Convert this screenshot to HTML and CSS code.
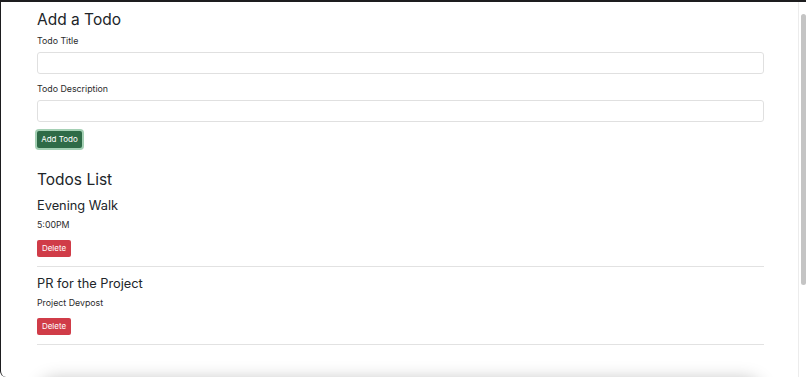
FILE: index.html
```html
<!DOCTYPE html>
<html lang="en">
<head>
    <meta charset="UTF-8">
    <meta name="viewport" content="width=device-width, initial-scale=1.0">
    <title>Todos</title>
    <link rel="stylesheet" href="styles.css">
</head>
<body>
    <div class="window">
        <div class="container">
            <h3 class="form-title">Add a Todo</h3>
            <form class="todo-form">
                <label class="form-label" for="title">Todo Title</label>
                <input class="form-control" type="text" id="title">
                <label class="form-label second" for="desc">Todo Description</label>
                <input class="form-control" type="text" id="desc">
                <button type="button" class="btn btn-success">Add Todo</button>
            </form>

            <h3 class="list-title">Todos List</h3>
            <div class="todo">
                <h4 class="todo-title">Evening Walk</h4>
                <p class="todo-desc">5:00PM</p>
                <button class="btn btn-danger">Delete</button>
            </div>
            <hr class="divider">
            <div class="todo">
                <h4 class="todo-title">PR for the Project</h4>
                <p class="todo-desc">Project Devpost</p>
                <button class="btn btn-danger">Delete</button>
            </div>
            <hr class="divider">
            <div class="footer-card"></div>
        </div>
        <div class="scrollbar"><div class="thumb"></div></div>
    </div>
</body>
</html>
```

FILE: styles.css
```css
* {
    box-sizing: border-box;
}

html, body {
    margin: 0;
    padding: 0;
    background-color: white;
}

body {
    font-family: Inter, "Liberation Sans", Arial, sans-serif;
    color: #212529;
}

.window {
    position: relative;
    width: 806px;
    height: 377px;
    overflow: hidden;
    border-top: 2px solid #1d1d1f;
    border-left: 1px solid #1d1d1f;
    border-bottom-left-radius: 6px;
    background-color: white;
}

.container {
    width: 763px;
    padding-left: 36px;
}

.form-title,
.list-title {
    margin: 0;
    font-size: 15.5px;
    font-weight: 400;
    line-height: 24px;
}

.form-title {
    margin-top: 6px;
}

.todo-form {
    margin: 0;
}

.form-label {
    display: block;
    margin-top: 2px;
    margin-bottom: 4px;
    font-size: 8.8px;
    line-height: 14px;
    color: #2b2b2b;
}

.form-label.second {
    margin-top: 8px;
}

.form-control {
    display: block;
    width: 100%;
    height: 22px;
    border: 1px solid #e0e0e0;
    border-radius: 3px;
    background-color: white;
    outline: none;
}

.btn {
    display: block;
    height: 17px;
    padding: 0;
    border: none;
    border-radius: 2px;
    color: white;
    font-family: inherit;
    font-size: 8px;
    line-height: 17px;
    white-space: nowrap;
    text-align: center;
    cursor: pointer;
}

.btn-success {
    margin-top: 9px;
    width: 45px;
    background-color: #2e6b47;
    box-shadow: 0 0 0 2px #a4d0b4;
}

.btn-danger {
    margin-top: 8px;
    width: 34px;
    background-color: #d03c48;
}

.list-title {
    margin-top: 20px;
}

.todo-title {
    margin: 4px 0 0;
    font-size: 12.8px;
    font-weight: 400;
    line-height: 20px;
}

.todo-desc {
    margin: 2px 0 0;
    font-size: 8.8px;
    line-height: 14px;
    color: #2b2b2b;
}

.divider {
    margin: 9px 0 7px;
    border: none;
    border-top: 1px solid #e2e2e2;
}

.footer-card {
    margin: 35px 4px 0;
    height: 60px;
    border-radius: 14px;
    background-color: white;
    box-shadow: 0 0 18px rgba(0, 0, 0, 0.28);
}

.scrollbar {
    position: absolute;
    top: -2px;
    right: 0;
    width: 8px;
    height: 379px;
    background-color: white;
    border-left: 1px solid #ececec;
}

.thumb {
    margin: 14px 0 0 2px;
    width: 5px;
    height: 271px;
    border-radius: 3px;
    background-color: #c4c4c4;
}
```
